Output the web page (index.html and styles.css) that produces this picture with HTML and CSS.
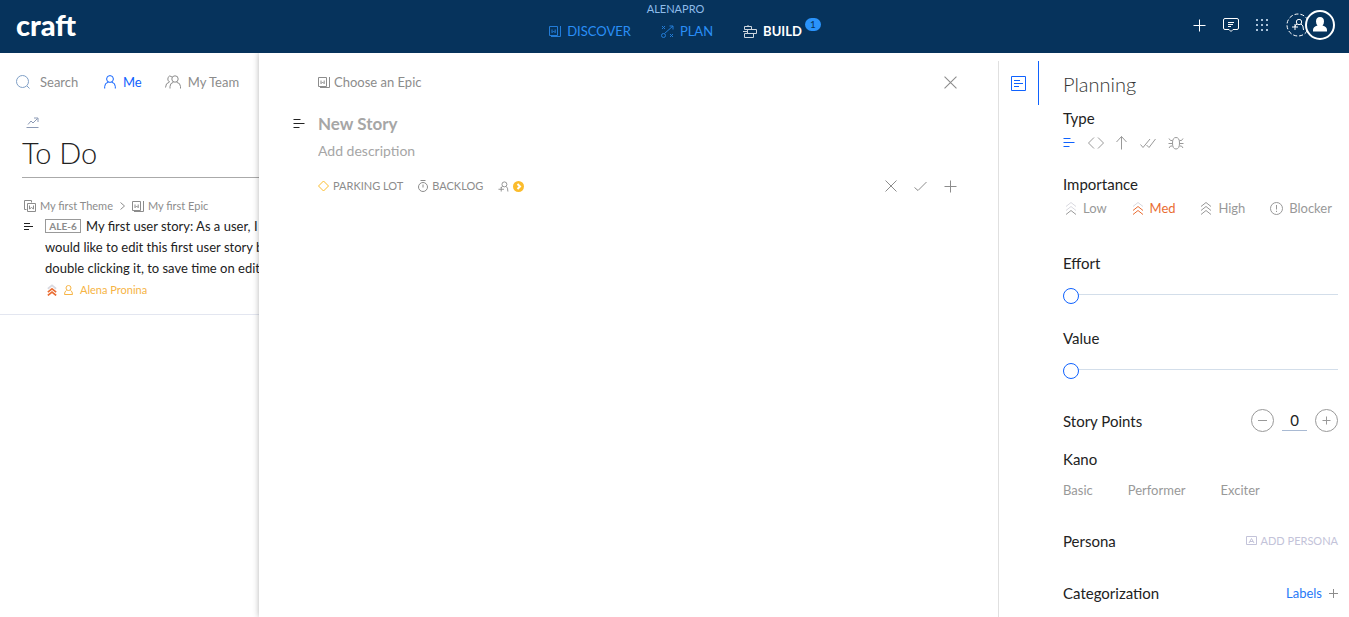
FILE: index.html
```
<!DOCTYPE html>
<html lang="en">
<head>
  <meta charset="UTF-8">
  <meta name="viewport" content="width=device-width, initial-scale=1.0">
  <title>Build | craft</title>
  <link rel="stylesheet" href="styles.css">
</head>
<body>

  <!-- Shared icons -->
  <svg class="sprite" aria-hidden="true">
    <symbol id="i-epic" viewBox="0 0 12 12"><path d="M.5 1.500h8v9h-8zM11.500 1v10.500H2M3 4.500v3.200l1.600-1.600 1.600 1.600V4.500"/></symbol>
    <symbol id="i-lines" viewBox="0 0 12 10"><path d="M.5 .5h7M.5 4.500h11M.5 8.500h6"/></symbol>
    <symbol id="i-person" viewBox="0 0 12 14"><circle cx="6" cy="4" r="3.400"/><path d="M.7 13.500v-2Q.7 7.700 4.500 7.200M11.300 13.500v-2q0-3.800-3.800-4.300"/></symbol>
    <symbol id="i-addperson" viewBox="0 0 12 11"><circle cx="7" cy="3.200" r="2.700"/><path d="M5 5.500Q3.500 6 3.500 7M9 5.500q1.800 1 1.800 5.500M.5 8.500h6M3.500 6v5"/></symbol>
    <symbol id="i-x" viewBox="0 0 12 12"><path d="M.5.5l11 11M11.500.5l-11 11"/></symbol>
    <symbol id="i-plus" viewBox="0 0 13 13"><path d="M6.500.5v12M.5 6.500h12"/></symbol>
    <symbol id="i-chevrons" viewBox="0 0 12 14"><path class="top" d="M1 5.500l5-4 5 4"/><path class="mid" d="M1 9.500l5-4 5 4"/><path d="M1 13.500l5-4 5 4"/></symbol>
  </svg>

  <header class="topbar">
    <a href="#" class="logo">craft</a>
    <div class="top-center">
      <a href="#" class="workspace">ALENAPRO</a>
      <nav class="main-nav">
        <a href="#"><svg width="12" height="12"><use href="#i-epic"/></svg>DISCOVER</a>
        <a href="#"><svg width="13" height="13" viewBox="0 0 13 13"><path d="M1 1l3 3M4 1L1 4M9 9l3 3M12 9l-3 3M3.500 8.500L12 1M8.500 1H12v3.500"/><circle cx="2.500" cy="10.500" r="2"/></svg>PLAN</a>
        <a href="#" class="active"><svg width="14" height="13" viewBox="0 0 14 13"><path d="M1.500 1.500h7v3h-7zM4.500 4.500h9v4h-9zM1.500 8.500h9v4h-9zM0 6.500h4.500M5 0v1.500"/></svg>BUILD<span class="badge">1</span></a>
      </nav>
    </div>
    <div class="top-actions">
      <button aria-label="Create"><svg width="13" height="13"><use href="#i-plus"/></svg></button>
      <button aria-label="Feedback"><svg width="16" height="16" viewBox="0 0 16 16"><path d="M2 1.500h12q1.500 0 1.500 1.500v8q0 1.500-1.500 1.500h-4l-2 2-2-2H2Q.5 12.500 .5 11V3Q.5 1.500 2 1.500zM5 5.500h6M5 7.500h5M5 9.500h3"/></svg></button>
      <button aria-label="Apps"><svg class="dots" width="13" height="13" viewBox="0 0 13 13"><path d="M0 0h2v2H0zM5 0h2v2H5zM10 0h2v2h-2zM0 5h2v2H0zM5 5h2v2H5zM10 5h2v2h-2zM0 10h2v2H0zM5 10h2v2H5zM10 10h2v2h-2z"/></svg></button>
      <div class="people">
        <button aria-label="Invite"><svg width="24" height="24" viewBox="0 0 24 24"><circle cx="12" cy="12" r="11" stroke-dasharray="4 2"/><circle cx="13" cy="9" r="2.700"/><path d="M11 11q-2 1-2 3M15 11q2.500 1 2.500 6M6 14h6M9 11v6"/></svg></button>
        <button aria-label="Account"><svg width="30" height="30" viewBox="0 0 30 30"><circle class="disc" cx="15" cy="15" r="14"/><path class="solid" d="M15 7q4 0 4 4.500 0 2.500-1.500 4 4.500 1 4.500 4.500v1.500H8V20q0-3.500 4.500-4.500-1.500-1.500-1.500-4Q11 7 15 7z"/></svg></button>
      </div>
    </div>
  </header>

  <main class="workarea">
    <section class="board">
      <div class="filters">
        <label class="search"><svg width="14" height="14" viewBox="0 0 14 14"><circle cx="6.500" cy="6.500" r="6"/><path d="M11 11l2.500 2.500"/></svg><input type="text" placeholder="Search" aria-label="Search"></label>
        <button class="me"><svg width="12" height="14"><use href="#i-person"/></svg>Me</button>
        <button><svg width="16" height="14" viewBox="0 0 16 14"><circle cx="10" cy="4" r="3.200"/><path d="M5 13.500v-2q0-3.500 3.500-4.300M15.500 13.500v-2q0-3.500-4-4.300M7 2Q4.500-.5 3 2.500q-1 3 1.500 4.500Q.5 8 .5 12.500"/></svg>My Team</button>
      </div>
      <div class="column">
        <svg class="trend" width="13" height="11" viewBox="0 0 13 11"><path d="M.5 10.500h12M2 7.500l3-3.500 2 2 4.500-4.500M8 1h4v4"/></svg>
        <h1>To Do</h1>
      </div>
      <article class="story">
        <div class="crumbs">
          <svg width="12" height="12" viewBox="0 0 12 12"><path d="M2.500 9.500h-2v-9h7v2M3.500 3.500h8v8h-8zM5.500 5.500v3.500L7.500 7.500 9.500 9V5.500"/></svg>
          <a href="#">My first Theme</a>
          <svg class="arrow" width="5" height="8" viewBox="0 0 5 8"><path d="M.5.500l4 3.500-4 3.500"/></svg>
          <svg width="12" height="12"><use href="#i-epic"/></svg>
          <a href="#">My first Epic</a>
        </div>
        <div class="story-main">
          <svg class="dark" width="9" height="8" viewBox="0 0 9 8"><path d="M0 .5h6M0 3.500h9M0 6.500h5"/></svg>
          <div>
            <p><span class="key">ALE-6</span>My first user story: As a user, I<br>would like to edit this first user story by<br>double clicking it, to save time on editing</p>
            <div class="owner"><svg class="med" width="10" height="12"><use href="#i-chevrons"/></svg><svg width="9" height="10" viewBox="0 0 9 10"><circle cx="4.500" cy="3" r="2.500"/><path d="M2.500 5.500Q.5 6 .5 9.500h8q0-3.500-2-4"/></svg>Alena Pronina</div>
          </div>
        </div>
      </article>
    </section>

    <section class="editor">
      <div class="editor-top">
        <button class="choose"><svg width="12" height="12"><use href="#i-epic"/></svg>Choose an Epic</button>
        <button aria-label="Close"><svg width="13" height="13"><use href="#i-x"/></svg></button>
      </div>
      <div class="title-row">
        <svg class="dark" width="12" height="10"><use href="#i-lines"/></svg>
        <input type="text" class="title" placeholder="New Story" aria-label="Story title">
      </div>
      <input type="text" class="description" placeholder="Add description" aria-label="Description">
      <div class="editor-bar">
        <div class="chips">
          <button><svg class="gold" width="11" height="12" viewBox="0 0 11 12"><path d="M5.500 1l5 5-5 5-5-5z"/></svg>PARKING LOT</button>
          <button><svg width="10" height="12" viewBox="0 0 10 12"><circle cx="5" cy="7" r="4.500"/><path d="M2.500.5h5M5 4.500v3"/></svg>BACKLOG</button>
          <button aria-label="Assign"><svg width="11" height="11"><use href="#i-addperson"/></svg><svg width="11" height="11" viewBox="0 0 11 11"><circle class="gold-fill" cx="5.500" cy="5.500" r="5.500"/><path class="white" d="M4.500 3l2.500 2.500L4.500 8"/></svg></button>
        </div>
        <div class="confirm">
          <button aria-label="Cancel"><svg width="12" height="12"><use href="#i-x"/></svg></button>
          <button aria-label="Save"><svg width="13" height="12" viewBox="0 0 13 12"><path d="M.5 7.500L4 10.500l8.500-8.500"/></svg></button>
          <button aria-label="Save and add another"><svg width="13" height="13"><use href="#i-plus"/></svg></button>
        </div>
      </div>
    </section>

    <div class="rail">
      <button aria-label="Planning"><svg width="15" height="15" viewBox="0 0 15 15"><path d="M.5.5h14v14H.5zM3 4.500h6M3 7.500h9M3 10.500h5"/></svg></button>
    </div>

    <aside class="planning">
      <h2>Planning</h2>

      <h3>Type</h3>
      <div class="types">
        <button class="selected" aria-label="Story"><svg width="12" height="10"><use href="#i-lines"/></svg></button>
        <button aria-label="Code"><svg width="16" height="12" viewBox="0 0 16 12"><path d="M6 .5L.5 6 6 11.500M10 .5L15.500 6 10 11.500"/></svg></button>
        <button aria-label="Improvement"><svg width="12" height="14" viewBox="0 0 12 14"><path d="M5.500 13.500V.5M.5 6L5.500 .5 10.500 6"/></svg></button>
        <button aria-label="Acceptance"><svg width="16" height="10" viewBox="0 0 16 10"><path d="M.5 6.500L3 9.500 10 1M6.500 7L9 9.500 15.500 1"/></svg></button>
        <button aria-label="Bug"><svg width="16" height="14" viewBox="0 0 16 14"><path d="M8 1.500q3.500 0 3.500 5.500 0 6-3.500 6T4.500 7q0-5.500 3.500-5.500zM4.500 4.500h-2L1 2.500M4.500 7.500H.5M4.500 10h-2L1 12M11.500 4.500h2L15 2.500M11.500 7.500h4M11.500 10h2L15 12"/></svg></button>
      </div>

      <h3>Importance</h3>
      <div class="importance">
        <button class="low"><svg width="12" height="14"><use href="#i-chevrons"/></svg>Low</button>
        <button class="med"><svg width="12" height="14"><use href="#i-chevrons"/></svg>Med</button>
        <button><svg width="12" height="14"><use href="#i-chevrons"/></svg>High</button>
        <button><svg width="13" height="13" viewBox="0 0 13 13"><circle cx="6.500" cy="6.500" r="6"/><path d="M6.500 3v4.500M6.500 8.800v1.200"/></svg>Blocker</button>
      </div>

      <label for="effort">Effort</label>
      <input type="range" id="effort" min="0" max="100" value="0">
      <label for="value">Value</label>
      <input type="range" id="value" min="0" max="100" value="0">

      <div class="points">
        <label for="points">Story Points</label>
        <div class="stepper">
          <button aria-label="Decrease"><svg width="11" height="11" viewBox="0 0 11 11"><path d="M1 5.500h9"/></svg></button>
          <input type="text" id="points" value="0">
          <button aria-label="Increase"><svg width="9" height="9" viewBox="0 0 9 9"><path d="M.5 4.500h8M4.500.5v8"/></svg></button>
        </div>
      </div>

      <h3>Kano</h3>
      <div class="kano">
        <button>Basic</button>
        <button>Performer</button>
        <button>Exciter</button>
      </div>

      <div class="row">
        <h3>Persona</h3>
        <button class="add-persona"><svg width="11" height="10" viewBox="0 0 11 10"><path d="M.5.500h10v8H.500zM3 7l2.500-4.500L8 7M4 5.500h3"/></svg>ADD PERSONA</button>
      </div>
      <div class="row">
        <h3>Categorization</h3>
        <button class="labels">Labels<svg width="9" height="9" viewBox="0 0 9 9"><path d="M4.500 0v9M0 4.500h9"/></svg></button>
      </div>
    </aside>
  </main>
</body>
</html>
```

FILE: styles.css
```
* {
  margin: 0;
  padding: 0;
  box-sizing: border-box;
}

body {
  display: flex;
  flex-direction: column;
  height: 100vh;
  overflow: hidden;
  background-color: #fff;
  color: #222;
  font-family: Lato, "Liberation Sans", sans-serif;
  font-size: 13px;
  line-height: 20px;
}

a {
  color: inherit;
  text-decoration: none;
}

button,
input {
  border: none;
  background: none;
  color: inherit;
  font: inherit;
  outline: none;
}

button {
  display: flex;
  align-items: center;
  cursor: pointer;
  white-space: nowrap;
}

svg {
  flex: none;
  fill: none;
  stroke: currentColor;
}

.sprite {
  position: absolute;
  width: 0;
  height: 0;
}

.dark {
  color: #222;
}

/* Top bar */
.topbar {
  position: relative;
  z-index: 2;
  flex: none;
  display: grid;
  grid-template-columns: 1fr auto 1fr;
  height: 53px;
  padding: 0 14px 0 16px;
  background-color: #06335c;
  color: #fff;
}

.logo {
  font-size: 29px;
  font-weight: 900;
  line-height: 49px;
}

.top-center {
  display: flex;
  flex-direction: column;
  align-items: center;
}

.workspace {
  color: #8fbcea;
  font-size: 11px;
  line-height: 18px;
}

.main-nav {
  display: flex;
  gap: 30px;
  margin-top: 3px;
  color: #2a8ff7;
}

.main-nav a {
  position: relative;
  display: flex;
  align-items: center;
  gap: 6px;
}

.main-nav svg {
  opacity: 0.8;
}

.main-nav .active {
  color: #fff;
  font-weight: bold;
}

.badge {
  position: absolute;
  left: 100%;
  top: -3px;
  width: 16px;
  height: 13px;
  margin-left: 3px;
  border-radius: 7px;
  background-color: #2a93fb;
  color: #06335c;
  font-size: 10px;
  font-weight: normal;
  line-height: 13px;
  text-align: center;
}

.top-actions {
  display: flex;
  align-items: center;
  justify-content: flex-end;
  gap: 17px;
  padding-bottom: 3px;
}

.dots {
  fill: #a9c2da;
  stroke: none;
}

.people {
  display: flex;
  align-items: center;
}

.people button + button {
  margin-left: -5px;
}

.disc {
  fill: #06335c;
}

.people .disc {
  stroke-width: 2;
}

.solid {
  fill: #fff;
  stroke: none;
}

/* Board behind the editor */
.workarea {
  flex: 1;
  display: flex;
  min-height: 0;
}

.board {
  flex: none;
  width: 259px;
  overflow: hidden;
  color: #8c8c8c;
  white-space: nowrap;
}

.filters {
  display: flex;
  gap: 23px;
  padding: 19px 0 0 16px;
}

.filters button {
  gap: 7px;
}

.filters .me {
  color: #0f62fe;
}

.search {
  display: flex;
  align-items: center;
  gap: 10px;
}

.search svg {
  color: #7f9fc6;
}

.search input {
  width: 41px;
}

input::placeholder {
  color: #8c8c8c;
  opacity: 1;
}

.column {
  margin-left: 22px;
  padding: 25px 0 3px;
  border-bottom: 1px solid #aaa;
}

.trend {
  display: block;
  margin-left: 4px;
  color: #8c9ab5;
}

.column h1 {
  margin-top: 3px;
  color: #222;
  font-size: 29px;
  font-weight: 300;
  line-height: 43px;
}

.story {
  padding: 18px 0 13px 24px;
  border-bottom: 1px solid #e3e6f0;
}

.crumbs {
  display: flex;
  align-items: center;
  gap: 4px;
  font-size: 11px;
}

.arrow {
  margin: 0 3px;
}

.story-main {
  display: flex;
  gap: 12px;
  color: #222;
}

.story-main > svg {
  margin-top: 7px;
}

.story-main p {
  line-height: 21px;
}

.key {
  display: inline-block;
  width: 36px;
  height: 14px;
  margin-right: 5px;
  border: 1px solid #999;
  color: #8c8c8c;
  font-size: 10px;
  font-weight: bold;
  line-height: 12px;
  text-align: center;
  vertical-align: 1px;
}

.owner {
  display: flex;
  align-items: center;
  gap: 7px;
  padding-left: 2px;
  color: #f6b445;
  font-size: 11px;
  line-height: 22px;
}

.med {
  color: #e96d33;
}

svg.med {
  stroke-width: 2;
}

#i-chevrons .top {
  stroke: var(--top, currentColor);
}

#i-chevrons .mid {
  stroke: var(--mid, currentColor);
}

.low,
.med {
  --top: #d9d9e0;
}

.low {
  --mid: #d9d9e0;
}

/* Story editor */
.editor {
  position: relative;
  flex: 1;
  min-width: 0;
  padding: 19px 41px 0 59px;
  background-color: #fff;
  box-shadow: 0 0 6px rgba(0, 0, 0, 0.3);
  clip-path: inset(0 0 0 -8px);
  color: #8c8c8c;
}

.editor-top,
.editor-bar {
  display: flex;
  justify-content: space-between;
  align-items: center;
}

.choose {
  gap: 4px;
}

.title-row {
  display: flex;
  align-items: center;
  gap: 13px;
  margin: 20px 0 0 -25px;
}

.title {
  flex: 1;
  min-width: 0;
  font-size: 17px;
  font-weight: bold;
  line-height: 24px;
}

.title::placeholder,
.description::placeholder {
  color: #a6a6a6;
}

.description {
  display: block;
  width: 100%;
  margin-top: 5px;
  font-size: 14px;
}

.editor-bar {
  margin-top: 15px;
}

.chips {
  display: flex;
  gap: 15px;
  font-size: 11px;
}

.chips button {
  gap: 4px;
}

.confirm {
  display: flex;
  align-items: center;
  gap: 17px;
}

.gold {
  color: #fbbc2c;
}

.gold-fill {
  fill: #fbbc2c;
  stroke: none;
}

.white {
  stroke: #fff;
  stroke-width: 2;
}

/* Tabs between the editor and the planning panel */
.rail {
  position: relative;
  flex: none;
  width: 41px;
  margin-top: 8px;
  border-left: 1px solid #e0e0e0;
}

.rail button {
  justify-content: center;
  width: 100%;
  height: 44px;
  border-right: 1px solid #0f62fe;
  color: #0f62fe;
}

/* Planning panel */
.planning {
  flex: none;
  width: 310px;
  padding: 21px 11px 0 24px;
  color: #999;
  overflow: hidden;
}

.planning h2 {
  margin-bottom: 14px;
  color: #333;
  font-size: 20px;
  font-weight: 300;
}

.planning h3,
.planning label {
  display: block;
  color: #222;
  font-size: 15px;
  font-weight: normal;
}

.types {
  display: flex;
  gap: 12px;
  height: 20px;
  margin: 5px 0 21px;
}

.types .selected {
  margin-right: 1px;
  color: #0f62fe;
}

.importance {
  display: flex;
  justify-content: space-between;
  margin: 4px 6px 35px 2px;
}

.importance button {
  gap: 6px;
}

.planning input[type="range"] {
  display: block;
  width: 100%;
  height: 16px;
  margin: 13px 0 26px;
  appearance: none;
  -webkit-appearance: none;
}

.planning input[type="range"]::-webkit-slider-runnable-track {
  height: 1px;
  background-color: #d3deea;
}

.planning input[type="range"]::-webkit-slider-thumb {
  -webkit-appearance: none;
  width: 16px;
  height: 16px;
  margin-top: -6px;
  border: 1px solid #0f62fe;
  border-radius: 50%;
  background-color: #fff;
}

.points {
  display: flex;
  align-items: center;
  justify-content: space-between;
  margin: 32px 0 17px;
}

.stepper {
  display: flex;
  align-items: center;
  gap: 8px;
}

.stepper button {
  justify-content: center;
  width: 23px;
  height: 23px;
  border: 1px solid #999;
  border-radius: 50%;
}

.stepper input {
  width: 25px;
  border-bottom: 1px solid #a9bad3;
  color: #222;
  font-size: 15px;
  text-align: center;
}

.kano {
  display: flex;
  gap: 35px;
  margin: 11px 0 31px;
}

.row {
  display: flex;
  align-items: center;
  justify-content: space-between;
  margin-bottom: 32px;
}

.add-persona {
  gap: 4px;
  color: #c3c3d9;
  font-size: 11px;
}

.labels {
  gap: 7px;
  color: #2779f7;
}

.labels svg {
  color: #8c8c8c;
}
```
